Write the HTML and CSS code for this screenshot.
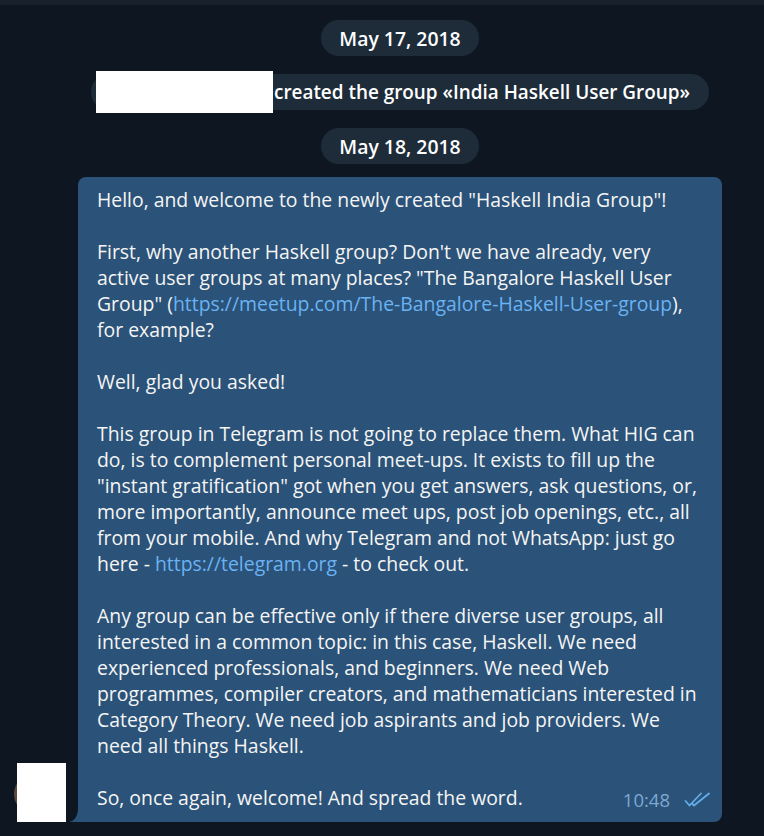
FILE: index.html
```html
<!DOCTYPE html>
<html>
<head>
<meta charset="utf-8">
<link rel="stylesheet" href="styles.css">
</head>
<body>
<div class="topbar"></div>
<div class="chat">
  <div class="center"><span class="pill">May 17, 2018</span></div>
  <div class="center service-row"><span class="pill service"><span class="redact"></span>created the group «India Haskell User Group»</span></div>
  <div class="center date2"><span class="pill">May 18, 2018</span></div>
  <div class="msg-row">
    <div class="avatar-wrap">
      <div class="avatar"></div>
      <div class="redact-avatar"></div>
    </div>
    <div class="bubble">
      <svg class="tail" width="12" height="14" viewBox="0 0 12 14"><path d="M12 0 V14 H0 C5 13 9 9 9 0 Z" fill="#2b5278"/></svg>
      <div class="text">
<p>Hello, and welcome to the newly created "Haskell India Group"!</p>
<p>First, why another Haskell group? Don't we have already, very active user groups at many places? "The Bangalore Haskell User Group" (<a href="#">https://meetup.com/The-Bangalore-Haskell-User-group</a>), for example?</p>
<p>Well, glad you asked!</p>
<p>This group in Telegram is not going to replace them. What HIG can do, is to complement personal meet-ups. It exists to fill up the "instant gratification" got when you get answers, ask questions, or, more importantly, announce meet ups, post job openings, etc., all from your mobile. And why Telegram and not WhatsApp: just go here - <a href="#">https://telegram.org</a> - to check out.</p>
<p>Any group can be effective only if there diverse user groups, all interested in a common topic: in this case, Haskell. We need experienced professionals, and beginners. We need Web programmes, compiler creators, and mathematicians interested in Category Theory. We need job aspirants and job providers. We need all things Haskell.</p>
<p>So, once again, welcome! And spread the word.</p>
      </div>
      <div class="meta">
        <span class="time">10:48</span>
        <svg class="checks" width="27" height="17" viewBox="0 0 27 17"><path d="M1.5 10 L5.5 14.5 L17 2.5 M8.5 13 L10 14.5 L25 2.5" fill="none" stroke="#62aeea" stroke-width="1.8" stroke-linecap="round" stroke-linejoin="round"/></svg>
      </div>
    </div>
  </div>
</div>
</body>
</html>
```
FILE: styles.css
```css
html, body {
  margin: 0;
  padding: 0;
  background: #0e1621;
  font-family: "Open Sans", "Noto Sans", sans-serif;
  color: #f5f5f5;
}
.topbar {
  height: 5px;
  background: #17212b;
}
.chat {
  padding-top: 15px;
}
.center {
  display: flex;
  justify-content: center;
  padding-left: 36px;
}
.pill {
  display: inline-flex;
  align-items: center;
  height: 36px;
  padding: 0 18px;
  border-radius: 18px;
  background: #1e2c3a;
  font-size: 19.4px;
  font-weight: 600;
  color: #ffffff;
  box-sizing: border-box;
}
.service-row {
  margin-top: 18px;
}
.service {
  padding: 0 19px 0 5px;
  font-size: 18.9px;
}
.redact {
  display: inline-block;
  width: 177px;
  height: 42px;
  margin: -3px 1px -3px 0;
  background: #ffffff;
}
.date2 {
  margin-top: 18px;
}
.msg-row {
  display: flex;
  align-items: flex-end;
  margin-top: 13px;
  padding-left: 14px;
}
.avatar-wrap {
  position: relative;
  width: 52px;
  height: 42px;
  margin-right: 12px;
  margin-bottom: 7px;
}
.avatar {
  width: 42px;
  height: 42px;
  border-radius: 50%;
  background: #5a4a3c;
}
.redact-avatar {
  position: absolute;
  left: 3px;
  top: -10px;
  width: 49px;
  height: 63px;
  background: #ffffff;
}
.bubble {
  position: relative;
  width: 644px;
  box-sizing: border-box;
  background: #2b5278;
  border-radius: 8px 8px 8px 0;
  padding: 10px 19px 11px 19px;
}
.tail {
  position: absolute;
  left: -9px;
  bottom: 0;
  display: block;
}
.text {
  font-size: 19.4px;
  line-height: 26px;
  color: #f5f5f5;
}
.text p {
  margin: 0 0 26px 0;
}
.text p:last-child {
  margin-bottom: 0;
}
.text a {
  color: #6ab3f3;
  text-decoration: none;
}
.meta {
  position: absolute;
  right: 11px;
  bottom: 10px;
  display: flex;
  align-items: center;
  gap: 14px;
}
.time {
  font-size: 18.5px;
  color: #7da8d3;
}
.checks {
  display: block;
}
```
